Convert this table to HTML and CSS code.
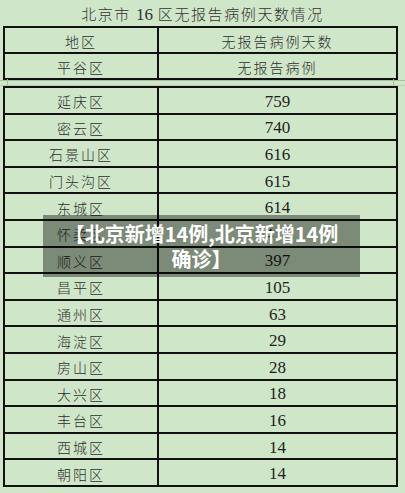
FILE: index.html
```html
<!DOCTYPE html>
<html lang="zh-CN">
<head>
<meta charset="utf-8">
<title>北京市16区无报告病例天数情况</title>
<link rel="stylesheet" href="styles.css">
</head>
<body>
<div class="page">
  <h1 class="title">北京市 <span class="num">16</span> 区无报告病例天数情况</h1>
  <div class="sheet head">
    <div class="cell zh">地区</div><div class="cell zh">无报告病例天数</div>
    <div class="cell zh">平谷区</div><div class="cell zh">无报告病例</div>
  </div>
  <div class="gap"><span class="gl"></span><span class="gr"></span></div>
  <div class="sheet body">
    <div class="cell zh">延庆区</div><div class="cell num">759</div>
    <div class="cell zh">密云区</div><div class="cell num">740</div>
    <div class="cell zh">石景山区</div><div class="cell num">616</div>
    <div class="cell zh">门头沟区</div><div class="cell num">615</div>
    <div class="cell zh">东城区</div><div class="cell num">614</div>
    <div class="cell zh">怀柔区</div><div class="cell num">417</div>
    <div class="cell zh">顺义区</div><div class="cell num">397</div>
    <div class="cell zh">昌平区</div><div class="cell num">105</div>
    <div class="cell zh">通州区</div><div class="cell num">63</div>
    <div class="cell zh">海淀区</div><div class="cell num">29</div>
    <div class="cell zh">房山区</div><div class="cell num">28</div>
    <div class="cell zh">大兴区</div><div class="cell num">18</div>
    <div class="cell zh">丰台区</div><div class="cell num">16</div>
    <div class="cell zh">西城区</div><div class="cell num">14</div>
    <div class="cell zh">朝阳区</div><div class="cell num">14</div>
  </div>
  <div class="caption">【北京新增14例,北京新增14例<br>确诊】</div>
</div>
</body>
</html>
```

FILE: styles.css
```css
html, body {
  margin: 0;
  padding: 0;
  background: #cfe6c9;
}
.page {
  position: relative;
  width: 405px;
  height: 493px;
  overflow: hidden;
  background: #cfe6c9;
  font-family: "Noto Sans CJK SC", "Noto Sans CJK JP", sans-serif;
  color: #2b2b2b;
}
.title {
  margin: 0;
  height: 26px;
  padding-top: 2px;
  box-sizing: border-box;
  line-height: 24px;
  text-align: center;
  font-size: 15px;
  font-weight: 300;
  letter-spacing: 1.6px;
  color: #333;
}
.title .num {
  font-family: "Liberation Serif", serif;
  font-size: 17px;
  font-weight: 400;
  letter-spacing: 0;
}
.sheet {
  display: grid;
  grid-template-columns: 154px 239px;
  margin-left: 3px;
  width: 393px;
  border-top: 2px solid #111;
  border-left: 2px solid #111;
  box-sizing: content-box;
}
.sheet.head { grid-auto-rows: 26px; }
.sheet.body { grid-auto-rows: 26.6px; }
.cell {
  display: flex;
  align-items: center;
  justify-content: center;
  box-sizing: border-box;
  border-right: 2px solid #111;
  border-bottom: 2px solid #111;
  padding-top: 2px;
  white-space: nowrap;
  line-height: 1;
}
.sheet .cell:nth-child(odd) { width: 154px; }
.zh {
  font-family: "Noto Sans CJK SC", "Noto Sans CJK JP", sans-serif;
  font-size: 14px;
  font-weight: 300;
  letter-spacing: 2px;
  color: #2e2e2e;
}
.cell.num {
  font-family: "Liberation Serif", serif;
  font-size: 17px;
  color: #1e1e1e;
}
.gap {
  position: relative;
  height: 6px;
  border-top: 1px solid #a9bca5;
  box-sizing: border-box;
}
.gap::after {
  content: "";
  position: absolute;
  left: 0;
  right: 0;
  top: 4px;
  border-top: 1px solid #b9cbb5;
}
.gl, .gr {
  position: absolute;
  top: -2px;
  bottom: 0;
  border-left: 1px solid #a9bca5;
}
.gl { left: 7px; }
.gr { left: 393px; }
.caption {
  position: absolute;
  left: 43px;
  top: 215px;
  width: 317px;
  height: 62px;
  box-sizing: border-box;
  padding: 6px 4px 0;
  background: rgba(0, 0, 0, 0.4);
  color: #fff;
  font-family: "Noto Sans CJK SC", "Noto Sans CJK JP", sans-serif;
  font-weight: 700;
  font-size: 20px;
  line-height: 25px;
  text-align: center;
}
```
